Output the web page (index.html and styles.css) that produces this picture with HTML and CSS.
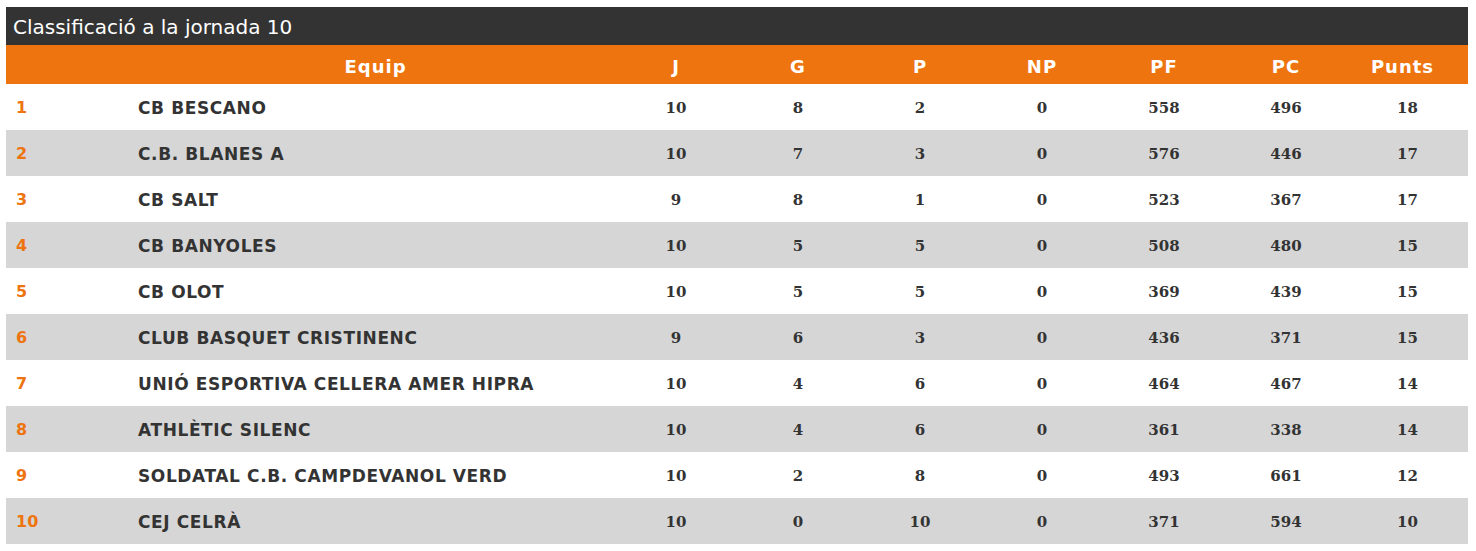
FILE: index.html
```html
<!DOCTYPE html>
<html>
<head>
<meta charset="utf-8">
<link rel="stylesheet" href="styles.css">
</head>
<body>
<div class="box">
  <div class="title">Classificació a la jornada 10</div>
  <table class="standings">
    <colgroup>
      <col class="c-rank"><col class="c-team">
      <col class="c-num"><col class="c-num"><col class="c-num"><col class="c-num"><col class="c-num"><col class="c-num"><col class="c-last">
    </colgroup>
    <thead>
      <tr><th></th><th class="h-team">Equip</th><th>J</th><th>G</th><th>P</th><th>NP</th><th>PF</th><th>PC</th><th class="h-last">Punts</th></tr>
    </thead>
    <tbody>
      <tr><td class="rank">1</td><td class="team">CB BESCANO</td><td>10</td><td>8</td><td>2</td><td>0</td><td>558</td><td>496</td><td>18</td></tr>
      <tr><td class="rank">2</td><td class="team">C.B. BLANES A</td><td>10</td><td>7</td><td>3</td><td>0</td><td>576</td><td>446</td><td>17</td></tr>
      <tr><td class="rank">3</td><td class="team">CB SALT</td><td>9</td><td>8</td><td>1</td><td>0</td><td>523</td><td>367</td><td>17</td></tr>
      <tr><td class="rank">4</td><td class="team">CB BANYOLES</td><td>10</td><td>5</td><td>5</td><td>0</td><td>508</td><td>480</td><td>15</td></tr>
      <tr><td class="rank">5</td><td class="team">CB OLOT</td><td>10</td><td>5</td><td>5</td><td>0</td><td>369</td><td>439</td><td>15</td></tr>
      <tr><td class="rank">6</td><td class="team">CLUB BASQUET CRISTINENC</td><td>9</td><td>6</td><td>3</td><td>0</td><td>436</td><td>371</td><td>15</td></tr>
      <tr><td class="rank">7</td><td class="team">UNIÓ ESPORTIVA CELLERA AMER HIPRA</td><td>10</td><td>4</td><td>6</td><td>0</td><td>464</td><td>467</td><td>14</td></tr>
      <tr><td class="rank">8</td><td class="team">ATHLÈTIC SILENC</td><td>10</td><td>4</td><td>6</td><td>0</td><td>361</td><td>338</td><td>14</td></tr>
      <tr><td class="rank">9</td><td class="team">SOLDATAL C.B. CAMPDEVANOL VERD</td><td>10</td><td>2</td><td>8</td><td>0</td><td>493</td><td>661</td><td>12</td></tr>
      <tr><td class="rank">10</td><td class="team">CEJ CELRÀ</td><td>10</td><td>0</td><td>10</td><td>0</td><td>371</td><td>594</td><td>10</td></tr>
    </tbody>
  </table>
</div>
</body>
</html>
```

FILE: styles.css
```css
html, body { margin: 0; padding: 0; background: #fff; }
body { padding: 7px 8px 0 6px; }
.box { width: 1462px; }
.title {
  background: #333333;
  color: #fff;
  font-family: "DejaVu Sans", sans-serif;
  font-size: 20px;
  height: 38px;
  line-height: 40px;
  padding-left: 7px;
  box-sizing: border-box;
}
.standings {
  width: 1462px;
  border-collapse: collapse;
  table-layout: fixed;
}
.c-rank { width: 124px; }
.c-team { width: 485px; }
.c-num { width: 122px; }
.c-last { width: 121px; }
.standings th {
  background: #ee7410;
  color: #fff;
  height: 39px;
  padding: 3px 0 0;
  box-sizing: border-box;
  font-family: "DejaVu Sans", sans-serif;
  font-weight: bold;
  font-size: 18px;
  letter-spacing: 1px;
  text-align: center;
}
.standings th.h-team { padding-left: 6px; }
.standings th.h-last { padding-right: 10px; }
.standings td {
  height: 46px;
  padding: 1px 0 0;
  box-sizing: border-box;
  text-align: center;
  font-family: "DejaVu Serif", serif;
  font-weight: bold;
  font-size: 15px;
  color: #333;
}
.standings tbody tr:nth-child(even) td { background: #d6d6d6; }
.standings td.rank {
  text-align: left;
  padding-left: 10px;
  color: #ee7410;
  font-family: "DejaVu Sans", sans-serif;
  font-size: 16px;
}
.standings td.team {
  text-align: left;
  padding-left: 8px;
  font-family: "DejaVu Sans", sans-serif;
  font-size: 17px;
  letter-spacing: 0.6px;
}
```
